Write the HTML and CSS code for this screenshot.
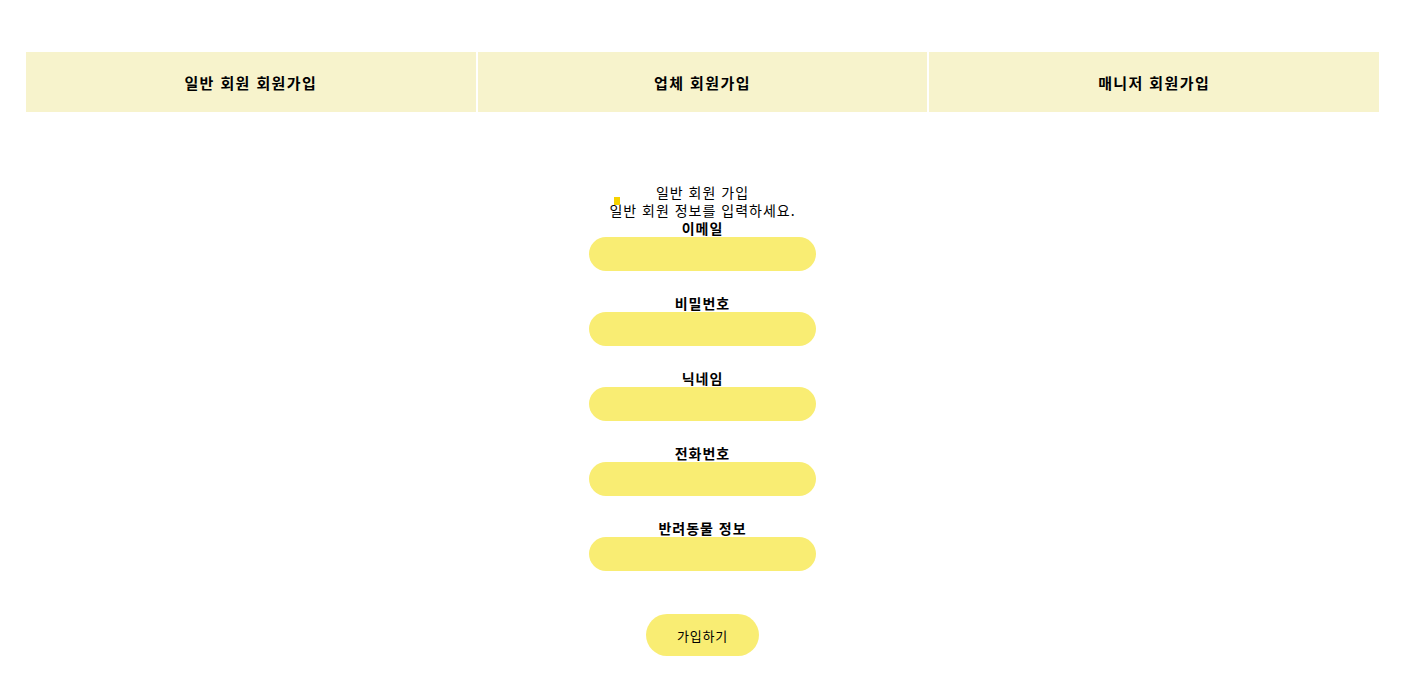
FILE: index.html
```html
<!DOCTYPE html>
<html lang="ko">
<head>
<meta charset="utf-8">
<title>회원가입</title>
<link rel="stylesheet" href="styles.css">
</head>
<body>
<div class="page">
  <nav class="tabs">
    <div class="tab">일반 회원 회원가입</div>
    <div class="tab">업체 회원가입</div>
    <div class="tab">매니저 회원가입</div>
  </nav>
  <main class="signup">
    <div class="intro">
      <div>일반 회원 가입</div>
      <div class="intro-sub"><span class="caret"></span>일반 회원 정보를 입력하세요.</div>
    </div>
    <form class="form">
      <div class="field"><label class="label">이메일</label><input class="input" type="text"></div>
      <div class="field"><label class="label">비밀번호</label><input class="input" type="password"></div>
      <div class="field"><label class="label">닉네임</label><input class="input" type="text"></div>
      <div class="field"><label class="label">전화번호</label><input class="input" type="text"></div>
      <div class="field"><label class="label">반려동물 정보</label><input class="input" type="text"></div>
      <button class="submit" type="button">가입하기</button>
    </form>
  </main>
</div>
</body>
</html>
```
FILE: styles.css
```css
* { box-sizing: border-box; }
body {
  margin: 0;
  background: #fff;
  font-family: "Noto Sans CJK KR", "Noto Sans", sans-serif;
  color: #000;
}
.page {
  margin: 52px 46px 0 26px;
}
.tabs {
  display: flex;
  gap: 2px;
  height: 60px;
}
.tab {
  flex: 1;
  background: #f7f3cc;
  display: flex;
  align-items: center;
  justify-content: center;
  font-size: 15px;
  font-weight: 700;
  letter-spacing: 1.4px;
}
.signup {
  display: flex;
  flex-direction: column;
  align-items: center;
  padding-top: 71px;
}
.intro {
  text-align: center;
  font-size: 14px;
  line-height: 18px;
  letter-spacing: 1px;
}
.intro-sub { position: relative; }
.caret {
  position: absolute;
  left: 5px;
  top: -4px;
  width: 6px;
  height: 8px;
  background: #f6d200;
}
.form {
  display: flex;
  flex-direction: column;
  align-items: center;
  margin: 0;
}
.field {
  display: flex;
  flex-direction: column;
  align-items: center;
  margin-bottom: 23px;
}
.label {
  font-size: 14px;
  font-weight: 700;
  line-height: 18px;
  letter-spacing: 1px;
}
.input {
  width: 227px;
  height: 34px;
  border: none;
  border-radius: 17px;
  background: #f9ed73;
  outline: none;
  padding: 0 14px;
  font-family: inherit;
}
.submit {
  margin-top: 20px;
  width: 113px;
  height: 42px;
  border: none;
  border-radius: 21px;
  background: #f9ed73;
  font-family: inherit;
  font-size: 13px;
  letter-spacing: 0.8px;
  color: #000;
  cursor: pointer;
}
```
